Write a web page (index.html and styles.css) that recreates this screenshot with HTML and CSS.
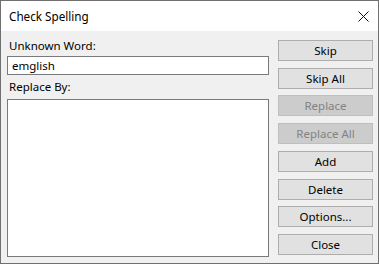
FILE: index.html
```
<!DOCTYPE html>
<html>
<head>
<meta charset="utf-8">
<link rel="stylesheet" href="styles.css">
</head>
<body>
<div class="window">
  <div class="titlebar">
    <span class="title">Check Spelling</span>
    <svg class="close" width="11" height="11" viewBox="0 0 11 11"><path d="M0.5 0.5 L10.5 10.5 M10.5 0.5 L0.5 10.5" stroke="#111" stroke-width="1" fill="none"/></svg>
  </div>
  <div class="content">
    <div class="left">
      <div class="lbl lbl1">Unknown Word:</div>
      <div class="field">emglish</div>
      <div class="lbl lbl2">Replace By:</div>
      <div class="area"></div>
    </div>
    <div class="buttons">
      <div class="btn">Skip</div>
      <div class="btn">Skip All</div>
      <div class="btn disabled">Replace</div>
      <div class="btn disabled">Replace All</div>
      <div class="btn">Add</div>
      <div class="btn">Delete</div>
      <div class="btn">Options...</div>
      <div class="btn">Close</div>
    </div>
  </div>
</div>
</body>
</html>
```
FILE: styles.css
```
html, body {
  margin: 0;
  padding: 0;
  background: #fff;
}
.window {
  width: 379px;
  height: 264px;
  box-sizing: border-box;
  border: 1px solid #707070;
  display: flex;
  flex-direction: column;
  font-family: "Noto Sans", "Liberation Sans", sans-serif;
  font-size: 11.5px;
  color: #000;
}
.titlebar {
  height: 30px;
  flex: none;
  background: #fff;
  display: flex;
  align-items: center;
  justify-content: space-between;
  padding: 0 9px 0 8px;
}
.title {
  font-size: 11.7px;
  line-height: 16px;
}
.close {
  display: block;
}
.content {
  flex: 1;
  background: #f0f0f0;
  display: flex;
  gap: 9px;
  padding: 9px 5px 0 6px;
}
.left {
  width: 262px;
  display: flex;
  flex-direction: column;
}
.lbl {
  line-height: 15px;
  padding-left: 2px;
}
.lbl1 {
  margin-top: -2px;
}
.field {
  margin-top: 3px;
  height: 19px;
  box-sizing: border-box;
  border: 1px solid #7a7a7a;
  background: #fff;
  line-height: 17px;
  padding-left: 4px;
}
.lbl2 {
  margin-top: 4px;
}
.area {
  margin-top: 5px;
  height: 158px;
  box-sizing: border-box;
  border: 1px solid #7a7a7a;
  background: #fff;
}
.buttons {
  width: 95px;
  display: flex;
  flex-direction: column;
  gap: 6.71px;
}
.btn {
  height: 21px;
  box-sizing: border-box;
  border: 1px solid #adadad;
  background: #e1e1e1;
  text-align: center;
  line-height: 19px;
}
.btn.disabled {
  background: #cccccc;
  border-color: #bfbfbf;
  color: #838383;
}
```
